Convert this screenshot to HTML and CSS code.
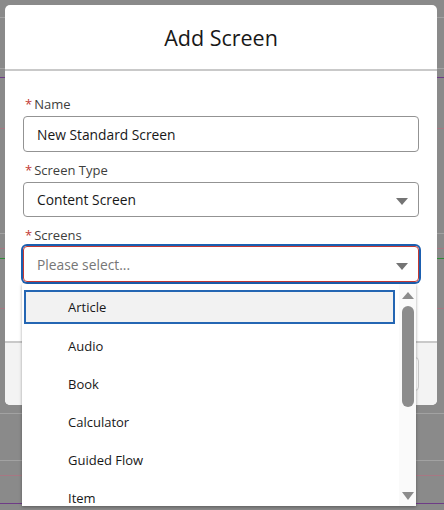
FILE: index.html
```html
<!DOCTYPE html>
<html>
<head>
<meta charset="utf-8">
<link rel="stylesheet" href="styles.css">
</head>
<body>
<div class="modal">
  <div class="modal-header"><h2 class="title">Add Screen</h2></div>
  <div class="modal-body">
    <div class="field">
      <label class="label"><span class="req">*</span>Name</label>
      <div class="input">New Standard Screen</div>
    </div>
    <div class="field">
      <label class="label"><span class="req">*</span>Screen Type</label>
      <div class="input select">Content Screen<span class="caret"></span></div>
    </div>
    <div class="field">
      <label class="label"><span class="req">*</span>Screens</label>
      <div class="combo">
        <div class="input select focus"><span class="placeholder">Please select...</span><span class="caret"></span></div>
        <div class="listbox">
          <ul class="options">
            <li class="option active">Article</li>
            <li class="option">Audio</li>
            <li class="option">Book</li>
            <li class="option">Calculator</li>
            <li class="option">Guided Flow</li>
            <li class="option">Item</li>
          </ul>
          <div class="scrollbar">
            <span class="arrow up"></span>
            <span class="thumb"></span>
            <span class="arrow down"></span>
          </div>
        </div>
      </div>
    </div>
  </div>
  <div class="modal-footer"><span class="btn"></span></div>
</div>
</body>
</html>
```
FILE: styles.css
```css
* { box-sizing: border-box; }
html, body { margin: 0; padding: 0; }
body {
  width: 444px;
  height: 510px;
  overflow: hidden;
  font-family: "Open Sans", "Noto Sans", sans-serif;
  background-color: #8a8a8a;
  background-image:
    linear-gradient(#a2a2a2, #a2a2a2),
    linear-gradient(#a2a2a2, #a2a2a2),
    linear-gradient(#6e3b86, #6e3b86),
    linear-gradient(#a77783, #a77783),
    linear-gradient(#a2a2a2, #a2a2a2),
    linear-gradient(#a77783, #a77783),
    linear-gradient(#2f8a36, #2f8a36),
    linear-gradient(#a77783, #a77783),
    linear-gradient(#a2a2a2, #a2a2a2),
    linear-gradient(#a2a2a2, #a2a2a2),
    linear-gradient(#a77783, #a77783),
    linear-gradient(#6e3b86, #6e3b86);
  background-repeat: no-repeat;
  background-size: 100% 1px;
  background-position:
    0 17px, 0 68px, 0 77px, 0 128px, 0 233px, 0 248px,
    0 258px, 0 308px, 0 413px, 0 460px, 0 475px, 0 503px;
}
.modal {
  position: relative;
  margin: 5px 0 0 5px;
  width: 432px;
  background: #fff;
  border-radius: 5px;
}
.modal-header {
  height: 66px;
  border-bottom: 2px solid #c9c9c9;
  display: flex;
  align-items: center;
  justify-content: center;
}
.title {
  margin: 0;
  font-weight: 400;
  font-size: 21.5px;
  color: #181818;
}
.modal-body {
  padding: 24px 18px 0 18px;
  height: 270px;
}
.field { margin-bottom: 9px; }
.label {
  display: flex;
  align-items: center;
  height: 18px;
  font-size: 13px;
  color: #3e3e3c;
  margin-bottom: 3px;
  padding-left: 2px;
}
.req { color: #c23934; margin-right: 2px; font-size: 13px; }
.input {
  position: relative;
  height: 36px;
  border: 1px solid #939393;
  border-radius: 4px;
  padding: 0 13px;
  display: flex;
  align-items: center;
  font-size: 13.8px;
  color: #181818;
}
.select { height: 35px; }
.caret {
  position: absolute;
  right: 10px;
  top: 15px;
  width: 0;
  height: 0;
  border-left: 6px solid transparent;
  border-right: 6px solid transparent;
  border-top: 7px solid #747474;
}
.combo { position: relative; }
.focus {
  border: 1px solid #c23934;
  box-shadow: 0 0 0 2px #1b5fb0;
  margin-top: -1px;
  height: 36px;
}
.focus .caret { top: 16px; }
.placeholder { color: #767676; }
.listbox {
  position: absolute;
  left: -1px;
  top: calc(100% + 2px);
  width: 394px;
  height: 222px;
  background: #fff;
  box-shadow: 0 1px 3px rgba(0,0,0,0.35);
  display: flex;
}
.options {
  list-style: none;
  margin: 0;
  padding: 6px 0 0 2px;
  flex: 1;
}
.option {
  height: 38px;
  display: flex;
  align-items: center;
  padding-left: 44px;
  font-size: 13px;
  color: #181818;
  margin-right: 4px;
}
.option.active {
  height: 34px;
  margin-bottom: 3px;
  background: #f2f2f2;
  border: 2px solid #2466b3;
  padding-left: 42px;
}
.scrollbar {
  width: 17px;
  background: #fafafa;
  display: flex;
  flex-direction: column;
  align-items: center;
  padding: 8px 0 6px;
}
.arrow {
  width: 0;
  height: 0;
  border-left: 6px solid transparent;
  border-right: 6px solid transparent;
}
.arrow.up { border-bottom: 7px solid #8c8c8c; }
.arrow.down { border-top: 8px solid #8c8c8c; margin-top: auto; }
.thumb {
  margin-top: 7px;
  width: 12px;
  height: 101px;
  border-radius: 6px;
  background: #8c8c8c;
}
.modal-footer {
  height: 64px;
  background: #f3f3f3;
  border-top: 2px solid #c9c9c9;
  border-radius: 0 0 5px 5px;
  display: flex;
  justify-content: flex-end;
  align-items: center;
  padding-right: 18px;
}
.btn {
  width: 80px;
  height: 34px;
  background: #fff;
  border: 1px solid #c9c9c9;
  border-radius: 4px;
}
```
